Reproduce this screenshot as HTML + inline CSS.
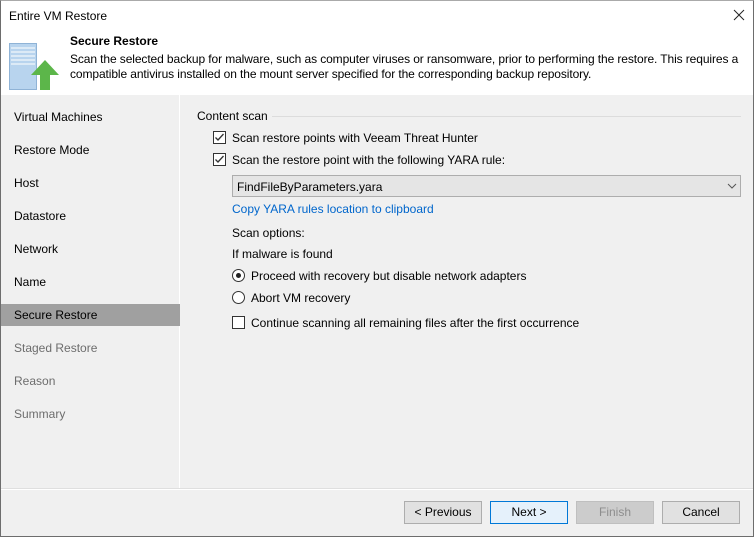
<!DOCTYPE html>
<html><head><style>
*{margin:0;padding:0;box-sizing:border-box}
body{width:754px;height:537px;overflow:hidden;background:#f0f0f0;font-family:"Liberation Sans",sans-serif;font-size:12px;color:#000;position:relative}
.a{position:absolute;white-space:nowrap}
.win{position:absolute;left:0;top:0;width:754px;height:537px;border:1px solid #6d6d6d;border-top-color:#aaa}
.nav{position:absolute;left:1px;top:95px;width:179px;height:393px;background:#f0f0f0;border-right:1px solid #fff}
.ni{position:absolute;left:14px}
.cb{position:absolute;width:13px;height:13px;border:1px solid #333;background:#fff}
.rb{position:absolute;width:13px;height:13px;border:1px solid #333;border-radius:50%;background:#fff}
.btn{position:absolute;top:501px;width:78px;height:23px;border:1px solid #adadad;background:#e1e1e1;text-align:center;line-height:21px}
</style></head><body>
<div class="a" style="left:0;top:0;width:754px;height:95px;background:#fff"></div>
<div class="a" style="left:9px;top:9px">Entire VM Restore</div>
<svg class="a" style="left:733px;top:9px" width="12" height="12"><path d="M1 1L11 11M11 1L1 11" stroke="#222" stroke-width="1"/></svg>
<svg class="a" style="left:9px;top:43px" width="52" height="48">
<rect x="0.5" y="0.5" width="27" height="46" fill="#b8d4ee" stroke="#8fb3d6"/>
<g stroke="#fff"><line x1="2" y1="5" x2="26" y2="5"/><line x1="2" y1="9" x2="26" y2="9"/><line x1="2" y1="13" x2="26" y2="13"/><line x1="2" y1="17" x2="26" y2="17"/><line x1="2" y1="21" x2="26" y2="21"/></g>
<path d="M36 17L50 32H41V47H31V32H22Z" fill="#5cb64a"/>
</svg>
<div class="a" style="left:70px;top:34px;font-weight:bold">Secure Restore</div>
<div class="a" style="left:70px;top:52px;letter-spacing:-0.1px">Scan the selected backup for malware, such as computer viruses or ransomware, prior to performing the restore. This requires a</div>
<div class="a" style="left:70px;top:67px;letter-spacing:-0.1px">compatible antivirus installed on the mount server specified for the corresponding backup repository.</div>
<div class="nav"></div>
<div class="a" style="left:1px;top:304px;width:179px;height:22px;background:#a0a0a0"></div>
<div class="a ni" style="top:110px">Virtual Machines</div>
<div class="a ni" style="top:143px">Restore Mode</div>
<div class="a ni" style="top:176px">Host</div>
<div class="a ni" style="top:209px">Datastore</div>
<div class="a ni" style="top:242px">Network</div>
<div class="a ni" style="top:275px">Name</div>
<div class="a ni" style="top:308px">Secure Restore</div>
<div class="a ni" style="top:341px;color:#6d6d6d">Staged Restore</div>
<div class="a ni" style="top:374px;color:#6d6d6d">Reason</div>
<div class="a ni" style="top:407px;color:#6d6d6d">Summary</div>
<div class="a" style="left:197px;top:109px">Content scan</div>
<div class="a" style="left:272px;top:116px;width:469px;height:1px;background:#dcdcdc"></div>
<div class="cb" style="left:213px;top:131px"></div>
<svg class="a" style="left:213px;top:131px" width="13" height="13"><path d="M2.5 6.5L5 9L10.5 3" stroke="#333" fill="none" stroke-width="1.3"/></svg>
<div class="a" style="left:232px;top:131px">Scan restore points with Veeam Threat Hunter</div>
<div class="cb" style="left:213px;top:153px"></div>
<svg class="a" style="left:213px;top:153px" width="13" height="13"><path d="M2.5 6.5L5 9L10.5 3" stroke="#333" fill="none" stroke-width="1.3"/></svg>
<div class="a" style="left:232px;top:153px">Scan the restore point with the following YARA rule:</div>
<div class="a" style="left:232px;top:175px;width:509px;height:22px;background:#e5e5e5;border:1px solid #adadad"></div>
<div class="a" style="left:237px;top:180px">FindFileByParameters.yara</div>
<svg class="a" style="left:727px;top:183px" width="10" height="6"><path d="M1 1L5 5L9 1" stroke="#555" fill="none"/></svg>
<div class="a" style="left:232px;top:202px;color:#0066cc">Copy YARA rules location to clipboard</div>
<div class="a" style="left:232px;top:226px">Scan options:</div>
<div class="a" style="left:232px;top:247px">If malware is found</div>
<div class="rb" style="left:232px;top:269px"></div>
<div class="a" style="left:236px;top:273px;width:5px;height:5px;border-radius:50%;background:#222"></div>
<div class="a" style="left:251px;top:269px">Proceed with recovery but disable network adapters</div>
<div class="rb" style="left:232px;top:291px"></div>
<div class="a" style="left:251px;top:291px">Abort VM recovery</div>
<div class="cb" style="left:232px;top:316px"></div>
<div class="a" style="left:251px;top:316px">Continue scanning all remaining files after the first occurrence</div>
<div class="a" style="left:1px;top:488px;width:752px;height:1px;background:#dfdfdf"></div>
<div class="a" style="left:1px;top:489px;width:752px;height:1px;background:#fff"></div>
<div class="btn" style="left:404px">&lt; Previous</div>
<div class="btn" style="left:490px;border-color:#0078d7;background:#e5f1fb">Next &gt;</div>
<div class="btn" style="left:576px;background:#ccc;border-color:#bfbfbf;color:#8d8d8d">Finish</div>
<div class="btn" style="left:662px">Cancel</div>
<div class="win"></div>
</body></html>
